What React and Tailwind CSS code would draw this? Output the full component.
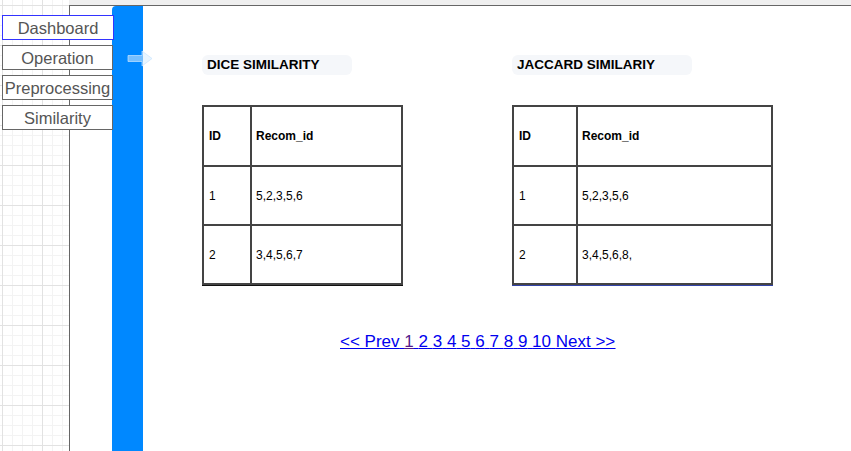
import { useState } from 'react'

const menu = ['Dashboard', 'Operation', 'Preprocessing', 'Similarity']

const dice = [
  ['1', '5,2,3,5,6'],
  ['2', '3,4,5,6,7'],
]

const jaccard = [
  ['1', '5,2,3,5,6'],
  ['2', '3,4,5,6,8,'],
]

export default function App() {
  const [active, setActive] = useState('Dashboard')

  return (
    <div className="relative flex h-[451px] w-[851px] overflow-hidden bg-white font-['Liberation_Sans',Arial,sans-serif]">
      {/* grid canvas on the left */}
      <aside className="h-full w-[69px] shrink-0 [background-image:linear-gradient(#e2e2e2_1px,transparent_1px),linear-gradient(90deg,#e2e2e2_1px,transparent_1px),linear-gradient(#f3f3f3_1px,transparent_1px),linear-gradient(90deg,#f3f3f3_1px,transparent_1px)] [background-size:40px_40px,40px_40px,10px_10px,10px_10px] [background-position:2px_5px,2px_5px,2px_5px,2px_5px]" />

      <div className="flex flex-1 flex-col">
        <div className="h-[5px] bg-[#efefef]" />
        <main className="flex flex-1 border-l border-t border-[#666] bg-white">
          <div className="ml-[42px] w-[31px] shrink-0 rounded-tl-[4px] bg-[#0088ff]" />

          <section className="flex flex-col pl-[59px] pt-[49px]">
            <div className="flex gap-[109px]">
              <SimTable title="DICE SIMILARITY" pill="w-[150px]" width="w-[201px]" first="w-[48px]" rows={dice} shadow="shadow-[0_1px_0_#111]" />
              <SimTable title="JACCARD SIMILARIY" pill="w-[180px]" width="w-[261px]" first="w-[64px]" rows={jaccard} shadow="shadow-[0_1px_0_#3344aa]" />
            </div>

            <nav className="ml-[138px] mt-[44px] text-[17px] text-[#0000ee] underline">
              <a href="#">&lt;&lt; Prev</a>{' '}
              <a href="#" className="text-[#551a8b]">1</a>{' '}
              {['2', '3', '4', '5', '6', '7', '8', '9', '10'].map((n) => (
                <span key={n}>
                  <a href="#">{n}</a>{' '}
                </span>
              ))}
              <a href="#">Next &gt;&gt;</a>
            </nav>
          </section>
        </main>
      </div>

      {/* floating side menu */}
      <div className="absolute left-[2px] top-[15px] flex flex-col gap-[5px]">
        {menu.map((item) => (
          <button
            key={item}
            onClick={() => setActive(item)}
            className={[
              'h-[25px] bg-white pt-[1px] text-center text-[16.5px] leading-none text-[#555]',
              item === 'Dashboard' ? 'w-[112px]' : 'w-[111px]',
              active === item ? 'border border-[#3333ff]' : 'border border-[#666]',
            ].join(' ')}
          >
            {item}
          </button>
        ))}
      </div>

      {/* faint collapse arrow */}
      <svg className="absolute left-[127px] top-[50px]" width="26" height="17" viewBox="0 0 26 17">
        <path d="M1 5.5h14V1l10 7.5-10 7.5v-4.5H1z" fill="rgba(215,236,255,0.55)" stroke="rgba(200,228,255,0.7)" strokeWidth="1" />
      </svg>
    </div>
  )
}

function SimTable({ title, pill, width, first, rows, shadow }) {
  return (
    <div className="flex flex-col">
      <div className={`flex h-[20px] items-center rounded-md bg-[#f5f7fa] pl-[5px] text-[13.5px] font-bold text-black ${pill}`}>
        {title}
      </div>
      <table className={`mt-[30px] table-fixed border-collapse border-2 border-[#444] text-[12px] text-black ${width} ${shadow}`}>
        <thead>
          <tr className="h-[60px]">
            <th className={`border-2 border-[#444] px-[5px] text-left font-bold ${first}`}>ID</th>
            <th className="border-2 border-[#444] px-[4px] text-left font-bold">Recom_id</th>
          </tr>
        </thead>
        <tbody>
          {rows.map(([id, rec]) => (
            <tr key={id} className="h-[59px]">
              <td className="border-2 border-[#444] px-[5px]">{id}</td>
              <td className="border-2 border-[#444] px-[4px]">{rec}</td>
            </tr>
          ))}
        </tbody>
      </table>
    </div>
  )
}
